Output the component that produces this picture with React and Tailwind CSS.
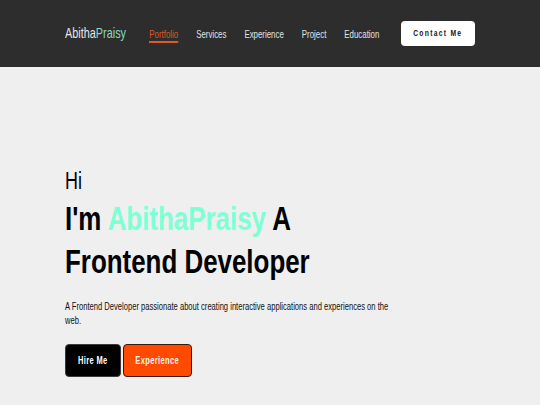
import React from 'react';

const navLinks = ['Portfolio', 'Services', 'Experience', 'Project', 'Education'];

const App = () => {
    return (
        <div className="min-h-[405px] bg-[#efefef] font-['Liberation_Sans',Arial,sans-serif]">

            {/* Header */}
            <header className="h-[67px] bg-[#2d2d2d] flex items-center px-[65px]">
                {/* condensed look: the text group is squeezed horizontally */}
                <div className="w-[312px] shrink-0">
                    <div className="flex w-max items-center origin-left scale-x-[0.75]">
                        <div className="text-[14.5px] leading-[17px] text-[#e6e6e6]">
                            Abitha<span className="text-[#86dcc0]">Praisy</span>
                        </div>
                        <nav className="flex items-center gap-[24px] ml-[31px] pt-[3px] text-[10.5px] leading-[13px] text-[#e2e2e2]">
                            {navLinks.map((link, i) => (
                                <a
                                    key={link}
                                    href="#"
                                    className={`border-b-2 ${i === 0 ? 'text-[#dd5a22] border-[#dd5a22]' : 'border-transparent'}`}
                                >
                                    {link}
                                </a>
                            ))}
                        </nav>
                    </div>
                </div>
                <button className="ml-auto w-[74px] h-[25px] bg-white rounded-[4px] flex items-center justify-center">
                    <span className="inline-block scale-x-[0.75] text-[9px] font-bold tracking-[1.7px] text-[#151515] whitespace-nowrap">
                        Contact Me
                    </span>
                </button>
            </header>

            {/* Hero */}
            <section className="pl-[65px] pt-[101px]">
                <h2 className="origin-left scale-x-[0.78] text-[23px] leading-[26px] text-black">Hi</h2>
                <h1 className="origin-left scale-x-[0.785] w-[420px] mt-[3px] text-[33px] leading-[43px] font-bold text-black">
                    I'm <span className="text-[#7fffd4]">AbithaPraisy</span> A
                    <br />
                    Frontend Developer
                </h1>
                <p className="origin-left scale-x-[0.76] w-[435px] mt-[17px] text-[10px] leading-[13.5px] text-[#111]">
                    A Frontend Developer passionate about creating interactive applications and experiences on the web.
                </p>
                <div className="flex gap-[2px] mt-[17px]">
                    <button className="w-[56px] h-[33px] bg-black rounded-[4px] border border-[#3a3a3a] flex items-center justify-center">
                        <span className="inline-block scale-x-[0.75] text-[10px] font-bold tracking-[0.5px] text-white whitespace-nowrap">
                            Hire Me
                        </span>
                    </button>
                    <button className="w-[69px] h-[33px] bg-[#ff4a00] rounded-[4px] border border-[#3d1806] flex items-center justify-center">
                        <span className="inline-block scale-x-[0.75] text-[10px] font-bold tracking-[0.5px] text-[#fff3ea] whitespace-nowrap">
                            Experience
                        </span>
                    </button>
                </div>
            </section>
        </div>
    );
};

export default App;
